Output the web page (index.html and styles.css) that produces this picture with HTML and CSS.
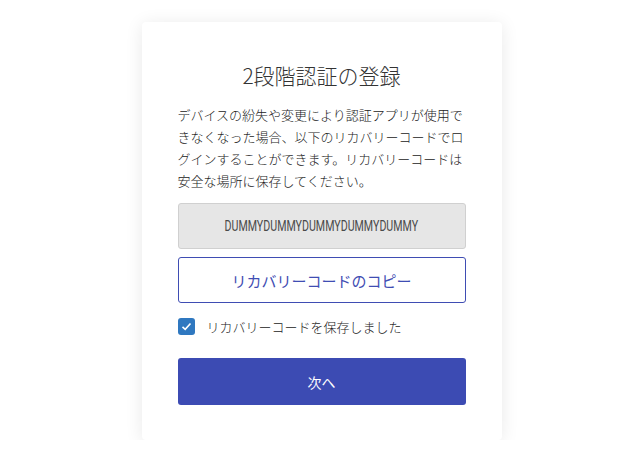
FILE: index.html
```html
<!DOCTYPE html>
<html lang="ja">
<head>
    <meta charset="UTF-8">
    <meta name="viewport" content="width=device-width, initial-scale=1.0">
    <title>2段階認証の登録</title>
    <link rel="stylesheet" href="styles.css">
</head>
<body>
    <div class="card">
        <h1>2段階認証の登録</h1>
        <p class="lead">デバイスの紛失や変更により認証アプリが使用できなくなった場合、以下のリカバリーコードでログインすることができます。リカバリーコードは安全な場所に保存してください。</p>
        <div class="code"><span>DUMMYDUMMYDUMMYDUMMYDUMMY</span></div>
        <button class="btn-outline" type="button">リカバリーコードのコピー</button>
        <label class="check">
            <span class="box">
                <svg width="11" height="9" viewBox="0 0 11 9"><path d="M1.5 4.8 L4.2 7.3 L9.5 1.5" fill="none" stroke="#fff" stroke-width="1.6"/></svg>
            </span>
            リカバリーコードを保存しました
        </label>
        <button class="btn-primary" type="button">次へ</button>
    </div>
</body>
</html>
```

FILE: styles.css
```css
body {
    font-family: "Noto Sans CJK JP", "Noto Sans", sans-serif;
    margin: 0;
    padding: 22px 0 0;
    background: #fff;
    color: #333;
}
.card {
    width: 288px;
    margin: 0 auto;
    padding: 37px 36px 35px;
    background: #fff;
    border-radius: 4px;
    box-shadow: 0 2px 18px rgba(0, 0, 0, 0.09);
}
h1 {
    margin: 0 0 13px;
    font-size: 21px;
    font-weight: 300;
    line-height: 32px;
    text-align: center;
    color: #333;
}
.lead {
    margin: 0 0 11px;
    font-size: 13px;
    line-height: 22px;
    font-weight: 300;
    color: #222;
}
.code {
    height: 44px;
    line-height: 44px;
    background: #e6e6e6;
    border: 1px solid #d0d0d0;
    border-radius: 3px;
    text-align: center;
    font-family: "Roboto", "Liberation Sans", sans-serif;
    font-size: 14px;
    color: #4a4a4a;
}
.code span {
    display: inline-block;
    transform: scaleX(0.76);
}
.btn-outline {
    display: block;
    width: 100%;
    height: 46px;
    margin-top: 8px;
    background: #fff;
    border: 1px solid #3f4db3;
    border-radius: 3px;
    font-family: inherit;
    font-size: 15px;
    font-weight: 400;
    color: #3f4db3;
}
.check {
    display: flex;
    align-items: center;
    gap: 12px;
    margin-top: 15px;
    font-size: 13px;
    font-weight: 300;
    line-height: 17px;
    color: #222;
}
.box {
    display: flex;
    align-items: center;
    justify-content: center;
    width: 17px;
    height: 17px;
    background: #2f78c0;
    border-radius: 3px;
}
.btn-primary {
    display: block;
    width: 100%;
    height: 47px;
    margin-top: 23px;
    background: #3c4bb3;
    border: none;
    border-radius: 3px;
    font-family: inherit;
    font-size: 14px;
    color: #fff;
}
```
